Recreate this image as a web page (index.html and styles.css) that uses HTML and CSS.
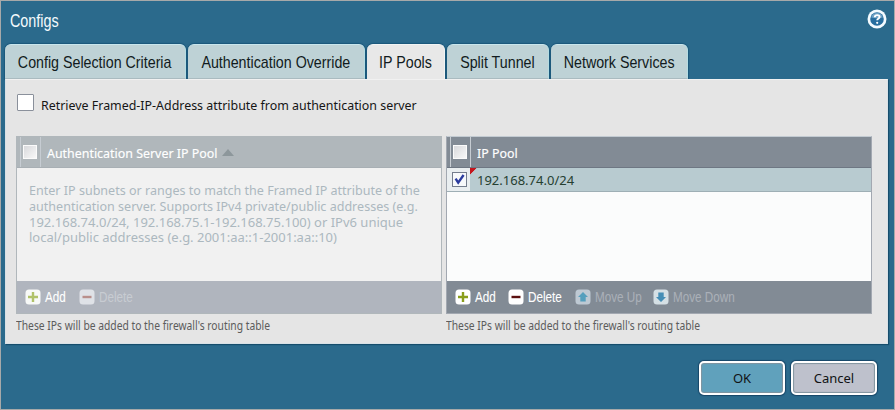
FILE: index.html
```html
<!DOCTYPE html>
<html lang="en">
<head>
<meta charset="utf-8">
<title>Configs</title>
<link rel="stylesheet" href="styles.css">
</head>
<body>
<div class="dialog">
  <header class="titlebar">
    <h1 class="title">Configs</h1>
    <svg class="help" viewBox="0 0 20 20">
      <circle cx="10" cy="10" r="9.5" fill="#f4fbff"/>
      <circle cx="10" cy="10" r="6.8" fill="#286e9f"/>
      <path d="M4.2 8.5a6 6 0 0 1 11.6 0Q10 10 4.2 8.5" fill="#6fa3c6"/>
      <path d="M7.8 8.2c0-2.8 4.8-2.6 4.8-.2 0 1.5-2.4 1.5-2.4 3.3" fill="none" stroke="#fff" stroke-width="1.9"/>
      <circle cx="10.2" cy="13.8" r="1.1" fill="#fff"/>
    </svg>
  </header>
  <nav class="tabs">
    <div class="tab tab-criteria"><span>Config Selection Criteria</span></div>
    <div class="tab tab-override"><span>Authentication Override</span></div>
    <div class="tab tab-pools active"><span>IP Pools</span></div>
    <div class="tab tab-split"><span>Split Tunnel</span></div>
    <div class="tab tab-network"><span>Network Services</span></div>
  </nav>
  <main class="panel">
    <label class="retrieve"><span class="checkbox"></span><span class="retrieve-text">Retrieve Framed-IP-Address attribute from authentication server</span></label>
    <div class="pools">
      <section class="pool">
        <div class="grid disabled">
          <div class="head">
            <div class="check-cell"><span class="box"></span></div>
            <span class="head-text head-auth">Authentication Server IP Pool</span>
            <svg class="sort" viewBox="0 0 12 7"><path d="M0 7 6 0l6 7z" fill="#8d979b"/></svg>
          </div>
          <div class="body hint">
            <div class="line tight">Enter IP subnets or ranges to match the Framed IP attribute of the</div>
            <div class="line tight">authentication server. Supports IPv4 private/public addresses (e.g.</div>
            <div class="line">192.168.74.0/24, 192.168.75.1-192.168.75.100) or IPv6 unique</div>
            <div class="line">local/public addresses (e.g. 2001:aa::1-2001:aa::10)</div>
          </div>
          <div class="toolbar">
            <svg class="icon" viewBox="0 0 16 16"><rect x=".5" y=".5" width="15" height="15" rx="3.5" fill="#f7f9f7"/><path d="M8 3v10M3 8h10" stroke="#b0c269" stroke-width="2.4"/></svg>
            <span class="label add">Add</span>
            <svg class="icon" viewBox="0 0 16 16"><rect x=".5" y=".5" width="15" height="15" rx="3.5" fill="#dfe2e7"/><path d="M3.5 8h9" stroke="#b98f8b" stroke-width="2.4"/></svg>
            <span class="label delete faded">Delete</span>
          </div>
        </div>
        <p class="note">These IPs will be added to the firewall's routing table</p>
      </section>
      <section class="pool">
        <div class="grid">
          <div class="head">
            <div class="check-cell"><span class="box"></span></div>
            <span class="head-text">IP Pool</span>
          </div>
          <div class="body">
            <div class="row">
              <div class="row-check"><svg class="tick" viewBox="0 0 15 15"><rect x=".5" y=".5" width="14" height="14" fill="#f7f9fb" stroke="#747d8d"/><path d="M3.6 6.6 6.2 10.6 11.6 3" fill="none" stroke="#2b3c9e" stroke-width="2.4"/></svg></div>
              <div class="row-cell">192.168.74.0/24</div>
            </div>
          </div>
          <div class="toolbar">
            <svg class="icon" viewBox="0 0 16 16"><rect x=".5" y=".5" width="15" height="15" rx="3.5" fill="#fff"/><path d="M8 3v10M3 8h10" stroke="#8a9e1c" stroke-width="2.4"/></svg>
            <span class="label add">Add</span>
            <svg class="icon" viewBox="0 0 16 16"><rect x=".5" y=".5" width="15" height="15" rx="3.5" fill="#fff"/><path d="M3.5 8h9" stroke="#5c1010" stroke-width="2.4"/></svg>
            <span class="label delete">Delete</span>
            <svg class="icon" viewBox="0 0 16 16"><rect x=".5" y=".5" width="15" height="15" rx="3.5" fill="#bec9d3"/><path d="M8 3 13 8H10.7V12.5H5.3V8H3z" fill="#559fbd"/></svg>
            <span class="label up faded">Move Up</span>
            <svg class="icon" viewBox="0 0 16 16"><rect x=".5" y=".5" width="15" height="15" rx="3.5" fill="#d5e0e5"/><path d="M8 13 3 8H5.3V3.5H10.7V8H13z" fill="#458eb6"/></svg>
            <span class="label down faded">Move Down</span>
          </div>
        </div>
        <p class="note">These IPs will be added to the firewall's routing table</p>
      </section>
    </div>
  </main>
  <footer class="actions">
    <button class="button ok">OK</button>
    <button class="button cancel">Cancel</button>
  </footer>
</div>
</body>
</html>
```
FILE: styles.css
```css
* { box-sizing: border-box; }
body { margin: 0; font-family: "Noto Sans", "Open Sans", sans-serif; }
.dialog {
  width: 895px; height: 410px;
  border: 1px solid #a7a9a9;
  background: #2b6a8c;
  padding: 0 6px 0 4px;
  display: flex; flex-direction: column;
}
.titlebar { height: 43px; display: flex; justify-content: space-between; padding: 8px 1px 0 5px; }
.title {
  margin: 1px 0 0; font: 17.5px/23px "Liberation Sans", sans-serif;
  color: #f4fafc; transform: scaleX(.82); transform-origin: left;
}
.help { width: 20px; height: 20px; }
.tabs { display: flex; gap: 2px; height: 35px; }
.tab {
  height: 35px; border-radius: 6px 6px 0 0; background: #bed2d6;
  border-top: 1px solid #c9e6ed; border-right: 1px solid #b4dce2;
  border-bottom: 1px solid #aabbc0;
  box-shadow: 0 0 1px 1px #1b587b;
  display: flex; justify-content: center; white-space: nowrap;
  font: 17px/35px "Liberation Sans", sans-serif; color: #111b20;
}
.tab span { flex: none; transform: scaleX(.838); }
.active { background: #e8e8e8; border-color: #f1f4f4; border-bottom-color: #e8e8e8; }
.tab-criteria { width: 181px; }
.tab-override { width: 177px; }
.tab-pools { width: 78px; }
.tab-split { width: 102px; }
.tab-network { width: 137px; }
.panel {
  height: 265px; padding: 14px 13px 0 10px; background: #e5e5e5;
  border: 1px solid #d8e1e6; border-top-color: #f1f1f1;
  box-shadow: 1px 1px 1px #164d6c;
}
.retrieve { display: flex; align-items: center; height: 22px; }
.checkbox { width: 17px; height: 17px; margin: -5px 7px 0 1px; background: #fff; border: 1px solid #8a909b; border-radius: 1px; }
.retrieve-text { font-size: 13px; color: #151515; white-space: nowrap; margin-top: -1px; transform: scaleX(.955); transform-origin: left; }
.pools { display: flex; gap: 4px; margin-top: 20px; }
.pool { width: 426px; flex: none; }
.grid {
  --bar: #828b95;
  height: 178px; border: 1px solid #a2a8b1; border-top-color: #c3cbd2; border-bottom-color: #a2a8b1;
  background: #fbfcfc; display: flex; flex-direction: column;
}
.head {
  height: 31px; display: flex; align-items: center; padding-left: 3px;
  background: var(--bar); border-bottom: 1px solid #6e7783; color: #fff;
}
.disabled { --bar: #b0b7bb; border-color: #b0b7bb; background: #f1f1f1; }
.disabled .head { border-color: #a8afb4; }
.check-cell { width: 21px; height: 30px; padding-left: 2px; border-left: 1px solid #c6ccd2; border-right: 1px solid #c6ccd2; display: flex; align-items: center; }
.box { width: 14px; height: 14px; border: 1px solid #fbfbfb; background: linear-gradient(135deg, #d8d9dc, #f8f8f8); }
.head-text { margin: 2px 0 0 6px; font-size: 13px; white-space: nowrap; transform: scaleX(.955); transform-origin: left; -webkit-text-stroke: .15px #fff; }
.head-auth { width: 169px; }
.sort { width: 12px; height: 7px; margin-left: 6px; }
.body { flex: 1; }
.hint { padding: 15px 0 0 12px; font-size: 13px; line-height: 15.8px; color: #acb8bf; white-space: nowrap; }
.tight { transform: scaleX(.965); transform-origin: left; }
.row { display: flex; height: 24px; background: #b8cbd0; border-bottom: 1px solid #9eafb5; }
.row-check { width: 23px; background: #e9eef0; padding: 4px 0 0 5px; }
.tick { display: block; width: 15px; height: 15px; }
.row-cell {
  flex: 1; padding-left: 7px; font-size: 13px; line-height: 25px; color: #254030;
  background: linear-gradient(135deg, #c5161d 4.5px, transparent 5px);
}
.toolbar {
  height: 32px; display: flex; align-items: center; padding-left: 8px; background: #828b95;
  font: 15px/30px "Liberation Sans", sans-serif; color: #fff; white-space: nowrap;
}
.disabled .toolbar { background: #b0b5be; }
.icon { width: 16px; height: 16px; margin-right: 4px; flex: none; }
.label { flex: none; transform: scaleX(.78); transform-origin: left; -webkit-text-stroke: .1px; }
.add { width: 33px; }
.disabled .add { width: 34px; }
.delete { width: 47px; }
.up { width: 58px; }
.faded { color: #aab0b8; }
.disabled .faded { color: #c8ccd2; }
.note { margin: 2px 0 0; font-size: 12px; line-height: 20px; color: #5c5c5c; white-space: nowrap; transform: scaleX(.858); transform-origin: left; }
.actions { display: flex; justify-content: flex-end; gap: 6px; padding: 17px 11px 0 0; }
.button {
  width: 86px; height: 34px; border: 2px solid #fff; border-radius: 5px; padding: 0;
  box-shadow: 0 0 1px 1px #174668, inset 0 0 1px 1px #81949f;
  font: 13px/28px "Noto Sans", sans-serif; color: #101214;
}
.ok { background: #60a1bc; }
.cancel { background: #bec1cc; }
```
